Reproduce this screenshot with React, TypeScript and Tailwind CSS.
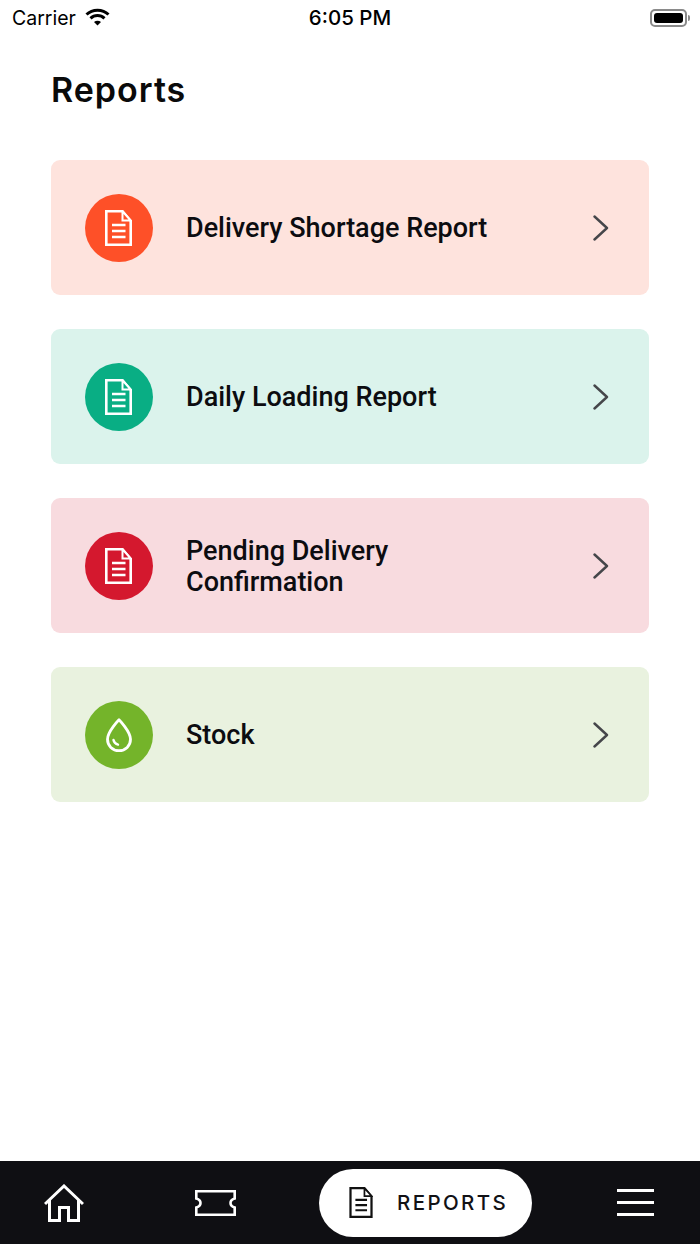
import React from "react";

function DocIcon({ className, stroke, bg }: { className: string; stroke: string; bg: string }) {
  return (
    <svg viewBox="0 0 27 36" className={className} fill="none">
      <path d="M1.3 1.3H17.5L25.7 11V34.7H1.3Z" stroke={stroke} strokeWidth="2.6" fill={bg} />
      <path d="M17.5 1.3V10.5H25.7Z" stroke={stroke} strokeWidth="2" fill={bg} />
      <path d="M7 15H20.5M7 21H20.5M7 27H20.5" stroke={stroke} strokeWidth="2.6" />
    </svg>
  );
}

function DropIcon() {
  return (
    <svg viewBox="0 0 26 34" className="w-[26px] h-[34px]" fill="none">
      <path
        d="M13 1.8C13 1.8 1.5 13.5 1.5 21.3C1.5 27.8 6.5 32.6 13 32.6C19.5 32.6 24.5 27.8 24.5 21.3C24.5 13.5 13 1.8 13 1.8Z"
        stroke="#fff"
        strokeWidth="2.8"
        strokeLinejoin="round"
      />
      <path d="M7.5 22C8 24.5 9.5 26 12 26.6" stroke="#fff" strokeWidth="2.4" strokeLinecap="round" />
    </svg>
  );
}

function Card({
  bg,
  circle,
  label,
  icon,
}: {
  bg: string;
  circle: string;
  label: React.ReactNode;
  icon: React.ReactNode;
}) {
  return (
    <div className={`${bg} h-[135px] rounded-[9px] flex items-center pl-[33.5px] pr-[40px]`}>
      <div className={`${circle} w-[68px] h-[68px] rounded-full flex items-center justify-center shrink-0`}>{icon}</div>
      <div className="ml-[33.5px] pt-[2px] flex-1 text-[27px] leading-[31px] font-medium text-[#0c0c10] font-['Roboto',sans-serif]">
        {label}
      </div>
      <svg viewBox="0 0 16 26" className="w-[16px] h-[26px] shrink-0" fill="none">
        <path d="M1.5 1.5L14 13L1.5 24.5" stroke="#45464a" strokeWidth="2.4" strokeLinecap="round" strokeLinejoin="round" />
      </svg>
    </div>
  );
}

export default function App() {
  return (
    <div className="w-[700px] h-[1244px] bg-white flex flex-col overflow-hidden font-['Inter',sans-serif]">
      <div className="h-[36px] shrink-0 flex items-center relative pl-[12px] pr-[10px] text-black">
        <span className="text-[19.5px] font-normal pt-[1px]">Carrier</span>
        <svg viewBox="0 0 25 18" className="w-[25px] h-[18px] ml-[9px] -mt-[3px]" fill="none">
          <path d="M1.5 6.5C7.5 0.8 17.5 0.8 23.5 6.5" stroke="#000" strokeWidth="3" />
          <path d="M5.5 10.3C9.5 6.6 15.5 6.6 19.5 10.3" stroke="#000" strokeWidth="3" />
          <path d="M9 14L12.5 17.5L16 14C14 12.2 11 12.2 9 14Z" fill="#000" />
        </svg>
        <span className="absolute left-0 right-0 text-center text-[20.5px] font-medium">6:05 PM</span>
        <div className="ml-auto flex items-center">
          <div className="w-[37px] h-[18px] rounded-[5px] border-2 border-[#8a8a8a] p-[2px]">
            <div className="w-full h-full bg-black rounded-[3px]" />
          </div>
          <div className="w-[2px] h-[6px] ml-[1px] bg-[#8a8a8a] rounded-r-sm" />
        </div>
      </div>

      <div className="mt-[33px] pl-[51px] h-[40px] flex items-center text-[34px] font-semibold text-[#0a0a0a] tracking-[1px]">
        Reports
      </div>

      <div className="mt-[51px] mx-[51px] flex flex-col gap-[34px]">
        <Card
          bg="bg-[#fee3dd]"
          circle="bg-[#fe5028]"
          label="Delivery Shortage Report"
          icon={<DocIcon className="w-[27px] h-[36px]" stroke="#fff" bg="#fe5028" />}
        />
        <Card
          bg="bg-[#dbf3ec]"
          circle="bg-[#09ae84]"
          label="Daily Loading Report"
          icon={<DocIcon className="w-[27px] h-[36px]" stroke="#fff" bg="#09ae84" />}
        />
        <Card
          bg="bg-[#f8dbdf]"
          circle="bg-[#d4182e]"
          label={
            <>
              Pending Delivery
              <br />
              Confirmation
            </>
          }
          icon={<DocIcon className="w-[27px] h-[36px]" stroke="#fff" bg="#d4182e" />}
        />
        <Card bg="bg-[#e9f2df]" circle="bg-[#74b42a]" label="Stock" icon={<DropIcon />} />
      </div>

      <div className="mt-auto h-[83px] shrink-0 bg-[#0f0f13] flex items-center pl-[44px]">
        <svg viewBox="0 0 40 38" className="w-[40px] h-[38px] shrink-0" fill="none">
          <path
            d="M1 20L20 2L39 20M5.5 16.5V36.5H15.5V23.5H24.5V36.5H34.5V16.5"
            stroke="#fff"
            strokeWidth="3"
          />
        </svg>
        <svg viewBox="0 0 41 26" className="w-[41px] h-[26px] ml-[111px] shrink-0" fill="none">
          <path
            d="M1.3 1.3H39.7V8.5C36.5 9.5 35.5 11 35.5 13C35.5 15 36.5 16.5 39.7 17.5V24.7H1.3V17.5C4.5 16.5 5.5 15 5.5 13C5.5 11 4.5 9.5 1.3 8.5Z"
            stroke="#fff"
            strokeWidth="2.6"
          />
        </svg>
        <div className="ml-[83px] w-[213px] h-[68px] rounded-full bg-white flex items-center pl-[30px] shrink-0">
          <DocIcon className="w-[24px] h-[31px]" stroke="#111" bg="#fff" />
          <span className="ml-[24px] pt-[1px] text-[20.5px] font-medium tracking-[2.4px] text-[#111115]">REPORTS</span>
        </div>
        <div className="ml-[85px] w-[37px] flex flex-col gap-[9.5px] shrink-0">
          <div className="h-[2.5px] bg-white" />
          <div className="h-[2.5px] bg-white" />
          <div className="h-[2.5px] bg-white" />
        </div>
      </div>
    </div>
  );
}
